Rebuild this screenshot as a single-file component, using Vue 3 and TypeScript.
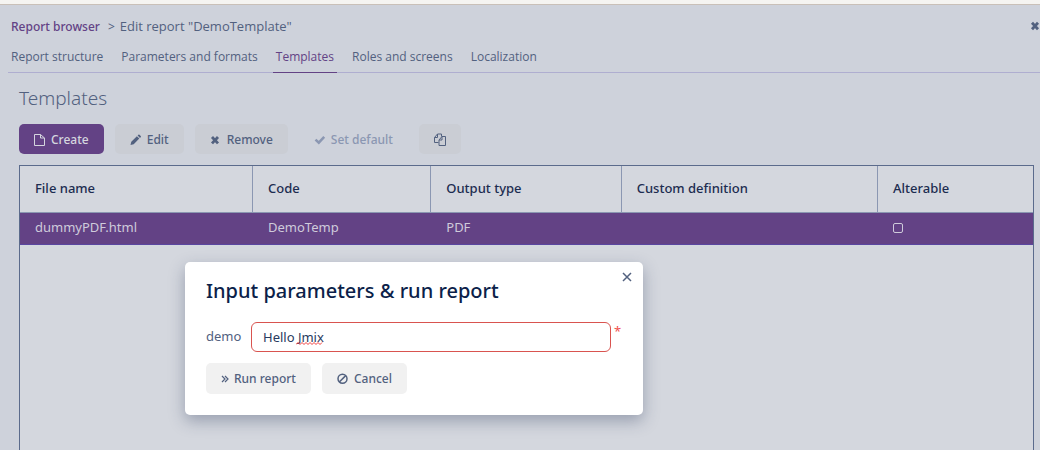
<script setup lang="ts">
import { ref } from 'vue'

const tabs: string[] = ['Report structure', 'Parameters and formats', 'Templates', 'Roles and screens', 'Localization']
const activeTab = ref<string>('Templates')
const columns: string[] = ['File name', 'Code', 'Output type', 'Custom definition', 'Alterable']
const rows = ref([{ file: 'dummyPDF.html', code: 'DemoTemp', output: 'PDF', custom: '', alterable: false }])
const demo = ref<string>('Hello Jmix')
</script>

<template>
  <div class="page">
    <header class="crumbs">
      <a class="crumb-link" href="#">Report browser</a>
      <span class="sep">&gt;</span>
      <span class="current">Edit report "DemoTemplate"</span>
      <button class="close-screen" type="button" aria-label="Close screen">
        <svg width="10" height="10" viewBox="0 0 10 10"><path d="M2 1.8 8 8.2M8 1.8 2 8.2" stroke="currentColor" stroke-width="2.8" /></svg>
      </button>
    </header>

    <nav class="tabs">
      <button v-for="t in tabs" :key="t" type="button" class="tab" :class="{ active: t === activeTab }" @click="activeTab = t">{{ t }}</button>
    </nav>

    <main class="content">
      <h1>Templates</h1>
      <div class="toolbar">
        <button class="btn primary" type="button">
          <svg class="icon" viewBox="0 0 12 13"><path d="M.5 1.500h6l4 3.500v7.500h-10zM6.500 1.500v3.500h4" fill="none" stroke="currentColor" /></svg>
          Create
        </button>
        <button class="btn" type="button">
          <svg class="icon" viewBox="0 0 12 13"><path d="M.5 12 1.300 8.800 6.900 3.200 9.300 5.600 3.700 11.200zM7.600 2.500 8.400 1.700Q8.900 1.200 9.500 1.800L10.700 3Q11.300 3.600 10.800 4.100L10 4.900z" fill="currentColor" /></svg>
          Edit
        </button>
        <button class="btn" type="button">
          <svg class="icon" viewBox="0 0 12 13"><path d="M2 4 8 10.400M8 4 2 10.400" stroke="currentColor" stroke-width="2.800" /></svg>
          Remove
        </button>
        <button class="btn disabled" type="button" disabled>
          <svg class="icon" viewBox="0 0 12 13"><path d="M1.500 6.600 4.800 9.700 10.200 3.800" fill="none" stroke="currentColor" stroke-width="2.500" /></svg>
          Set default
        </button>
        <button class="btn only-icon" type="button" aria-label="Copy">
          <svg class="icon" viewBox="0 0 12 13"><path d="M4.500 9.500h-4v-5l3-3.500h4v2.500M3.500 1v3.500h-3M5 12.500v-5.500l3-3.500h3.500v9zM8 3.500v3.500h-3" fill="none" stroke="currentColor" /></svg>
        </button>
      </div>

      <div class="grid">
        <table>
          <colgroup>
            <col class="c-file" /><col class="c-code" /><col class="c-output" /><col class="c-custom" /><col />
          </colgroup>
          <thead>
            <tr><th v-for="c in columns" :key="c" scope="col">{{ c }}</th></tr>
          </thead>
          <tbody>
            <tr v-for="r in rows" :key="r.code">
              <td>{{ r.file }}</td>
              <td>{{ r.code }}</td>
              <td>{{ r.output }}</td>
              <td>{{ r.custom }}</td>
              <td><input v-model="r.alterable" class="check" type="checkbox" aria-label="Alterable" /></td>
            </tr>
          </tbody>
        </table>
      </div>
    </main>

    <section class="dialog" role="dialog" aria-labelledby="dialog-title">
      <button class="close-dialog" type="button" aria-label="Close dialog">
        <svg width="10" height="10" viewBox="0 0 10 10"><path d="M1 1 9 9M9 1 1 9" stroke="currentColor" stroke-width="1.500" /></svg>
      </button>
      <h2 id="dialog-title">Input parameters &amp; run report</h2>
      <div class="field">
        <label for="demo">demo</label>
        <div class="input-wrap">
          <input id="demo" v-model="demo" type="text" required spellcheck="false" />
          <svg v-if="demo === 'Hello Jmix'" class="squiggle" width="27" height="3" viewBox="0 0 27 3" aria-hidden="true">
            <path d="M0 2.500 2 .5 4 2.500 6 .5 8 2.500 10 .5 12 2.500 14 .5 16 2.500 18 .5 20 2.500 22 .5 24 2.500 26 .5" fill="none" stroke="#f03c3c" />
          </svg>
        </div>
        <span class="required">*</span>
      </div>
      <div class="actions">
        <button class="btn" type="button">
          <svg class="icon narrow" viewBox="0 0 8 13"><path d="M1 4 4 7 1 10M4 4 7 7 4 10" fill="none" stroke="currentColor" stroke-width="1.200" /></svg>
          Run report
        </button>
        <button class="btn" type="button">
          <svg class="icon" viewBox="0 0 12 13"><circle cx="5.500" cy="6.800" r="4.500" fill="none" stroke="currentColor" stroke-width="1.500" /><path d="M2.300 10 8.700 3.600" stroke="currentColor" stroke-width="1.500" /></svg>
          Cancel
        </button>
      </div>
    </section>
  </div>
</template>

<style>
body {
  margin: 0;
}
</style>

<style scoped>
.page {
  position: relative;
  box-sizing: border-box;
  display: flex;
  flex-direction: column;
  min-height: 100vh;
  overflow: hidden;
  padding-left: 8px;
  border-top: 4px solid #f5f4f1;
  background: #ced2db;
  box-shadow: inset 0 1px #c9c0b8;
  color: #52617f;
  font-family: "Noto Sans", "Open Sans", sans-serif;
  font-size: 13px;
}
button,
input {
  font: inherit;
  color: inherit;
}
button {
  border: 0;
  padding: 0;
  background: none;
  cursor: pointer;
}
svg {
  display: block;
}
.crumbs {
  display: flex;
  align-items: center;
  box-sizing: border-box;
  height: 37px;
  padding: 7px 0 0 3px;
}
.crumb-link {
  color: #634285;
  font-weight: 500;
  font-size: 12px;
  text-decoration: none;
}
.sep {
  margin: 0 5px 0 8px;
  font-size: 12px;
}
.current {
  font-family: "Open Sans", "Noto Sans", sans-serif;
}
.close-screen {
  margin-left: auto;
}
.tabs {
  display: flex;
  gap: 12px;
  height: 32px;
  box-shadow: inset 0 -1px #afaed0;
}
.tab {
  padding: 0 3px 1px 3px;
  font-family: "Open Sans", "Noto Sans", sans-serif;
  font-size: 12px;
}
.tab.active {
  color: #634285;
  box-shadow: inset 0 -1px #634285;
}
.content {
  display: flex;
  flex: 1;
  flex-direction: column;
  padding: 11px 6px 0 11px;
}
h1 {
  margin: 0;
  font-size: 19px;
  line-height: 28px;
  font-weight: 300;
}
.toolbar {
  display: flex;
  gap: 11px;
  padding: 12px 0 11px;
}
.btn {
  display: flex;
  align-items: center;
  justify-content: center;
  gap: 5px;
  box-sizing: border-box;
  height: 30px;
  padding: 0 15px;
  border-radius: 5px;
  background: #cacdd4;
  font-size: 12px;
  font-weight: 500;
}
.btn.primary {
  background: #634285;
  color: #d5d6df;
}
.btn.disabled {
  background: none;
  color: #8b97b2;
}
.icon {
  width: 12px;
  height: 13px;
}
.icon.narrow {
  width: 8px;
}
.grid {
  flex: 1;
  border: 1px solid #5b6b8c;
  border-bottom: 0;
  background: #d4d7de;
}
table {
  width: 100%;
  table-layout: fixed;
  border-collapse: separate;
  border-spacing: 0;
}
.c-file {
  width: 23%;
}
.c-code {
  width: 17.600%;
}
.c-output {
  width: 18.800%;
}
.c-custom {
  width: 25.300%;
}
th {
  box-sizing: border-box;
  height: 47px;
  padding: 0 15px 2px;
  border-right: 1px solid #8b97b2;
  border-bottom: 1px solid #8b97b2;
  color: #1c2c50;
  font-weight: 500;
  text-align: left;
}
th:last-child {
  border-right: 0;
}
td {
  box-sizing: border-box;
  height: 32px;
  padding: 0 15px 3px;
  border-bottom: 1px solid #5a46a0;
  background: #634285;
  color: #cfcbdb;
}
.check {
  display: block;
  appearance: none;
  box-sizing: border-box;
  width: 10px;
  height: 10px;
  margin: 2px 0 0;
  border: 1px solid #cfcbdb;
  border-radius: 2px;
}
.dialog {
  position: absolute;
  top: 258px;
  left: 185px;
  box-sizing: border-box;
  width: 458px;
  padding: 14px 21px 21px;
  border-radius: 5px;
  background: #fff;
  box-shadow: 0 6px 16px rgba(40, 55, 90, 0.35);
}
.close-dialog {
  position: absolute;
  top: 10px;
  right: 11px;
}
h2 {
  margin: 0;
  color: #0c1f4a;
  font-size: 20px;
  line-height: 30px;
  font-weight: 500;
}
.field {
  display: flex;
  align-items: center;
  margin-top: 16px;
}
label {
  width: 45px;
  padding-bottom: 2px;
}
.input-wrap {
  position: relative;
  flex: 1;
}
.input-wrap input {
  display: block;
  box-sizing: border-box;
  width: 100%;
  height: 30px;
  padding: 0 11px;
  border: 1px solid #d9534f;
  border-radius: 6px;
  outline: 0;
  background: #fff;
  color: #283a60;
}
.squiggle {
  position: absolute;
  left: 45px;
  top: 20px;
}
.required {
  align-self: flex-start;
  width: 11px;
  padding-left: 3px;
  box-sizing: border-box;
  color: #f0524f;
  line-height: 18px;
}
.actions {
  display: flex;
  gap: 11px;
  margin-top: 11px;
}
.dialog .btn {
  height: 31px;
  background: #f1f1f1;
}
</style>
